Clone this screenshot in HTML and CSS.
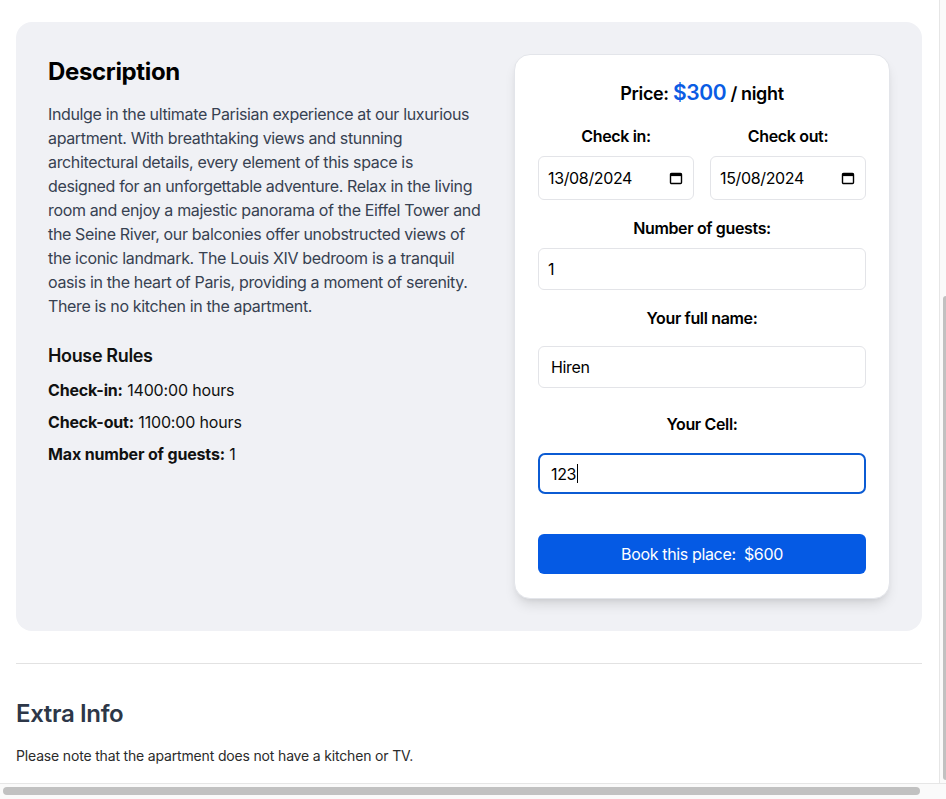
FILE: index.html
```html
<!DOCTYPE html>
<html>
<head>
<meta charset="utf-8">
<link rel="stylesheet" href="styles.css">
</head>
<body>
<div class="window">
  <div class="top-row">
    <main class="main">
      <section class="panel">
        <div class="info">
          <h2 class="title">Description</h2>
          <p class="desc">Indulge in the ultimate Parisian experience at our luxurious apartment. With breathtaking views and stunning architectural details, every element of this space is designed for an unforgettable adventure. Relax in the living room and enjoy a majestic panorama of the Eiffel Tower and the Seine River, our balconies offer unobstructed views of the iconic landmark. The Louis XIV bedroom is a tranquil oasis in the heart of Paris, providing a moment of serenity. There is no kitchen in the apartment.</p>
          <h3 class="rules-title">House Rules</h3>
          <p class="rule"><b>Check-in:</b> 1400:00 hours</p>
          <p class="rule"><b>Check-out:</b> 1100:00 hours</p>
          <p class="rule"><b>Max number of guests:</b> 1</p>
        </div>
        <div class="card">
          <div class="price">Price: <span class="amount">$300</span> / night</div>
          <div class="dates">
            <div class="date-col">
              <div class="label">Check in:</div>
              <div class="date-field"><span>13/08/2024</span>
                <svg class="cal" width="14" height="14" viewBox="0 0 14 14"><rect x="1.5" y="2.5" width="11" height="10" rx="1" fill="none" stroke="#000" stroke-width="1.4"/><rect x="1.5" y="2.5" width="11" height="2.6" fill="#000"/></svg>
              </div>
            </div>
            <div class="date-col">
              <div class="label">Check out:</div>
              <div class="date-field"><span>15/08/2024</span>
                <svg class="cal" width="14" height="14" viewBox="0 0 14 14"><rect x="1.5" y="2.5" width="11" height="10" rx="1" fill="none" stroke="#000" stroke-width="1.4"/><rect x="1.5" y="2.5" width="11" height="2.6" fill="#000"/></svg>
              </div>
            </div>
          </div>
          <div class="label label-guests">Number of guests:</div>
          <input class="field field-guests" type="text" value="1">
          <div class="label label-name">Your full name:</div>
          <input class="field field-name" type="text" value="Hiren">
          <div class="label label-cell">Your Cell:</div>
          <div class="field field-cell"><span>123</span><span class="caret"></span></div>
          <button class="book">Book this place:&nbsp; $600</button>
        </div>
      </section>
      <hr class="divider">
      <h2 class="extra-title">Extra Info</h2>
      <p class="extra-text">Please note that the apartment does not have a kitchen or TV.</p>
    </main>
    <div class="vscroll"><div class="vthumb"></div></div>
  </div>
  <div class="hscroll"><div class="hthumb"></div><div class="corner"></div></div>
</div>
</body>
</html>
```

FILE: styles.css
```css
* { box-sizing: border-box; }
html, body { margin: 0; padding: 0; background: #fff; }
body {
  font-family: Inter, "Noto Sans", "Liberation Sans", sans-serif;
  color: #111;
  overflow: hidden;
  letter-spacing: -0.022em;
}
.window {
  width: 946px;
  height: 799px;
  display: flex;
  flex-direction: column;
}
.top-row {
  display: flex;
  height: 783px;
}
.main {
  width: 939px;
  height: 783px;
  overflow: hidden;
  padding: 22px 17px 0 16px;
}
.vscroll {
  width: 7px;
  border-left: 1px solid #e6e6e6;
  background: #fafafa;
  padding-top: 296px;
  padding-left: 3px;
}
.vthumb {
  width: 4px;
  height: 484px;
  background: #c1c1c1;
  border-radius: 3px 0 0 3px;
}
.hscroll {
  height: 16px;
  border-top: 1px solid #e6e6e6;
  background: #fafafa;
  display: flex;
  padding: 3px 0 0 3px;
}
.hthumb {
  width: 917px;
  height: 8px;
  background: #c1c1c1;
  border-radius: 4px;
}
.corner { flex: 1; }

.panel {
  background: #f0f1f5;
  border-radius: 16px;
  padding: 32px;
  display: grid;
  grid-template-columns: 1fr 376px;
  gap: 32px;
  align-items: start;
}
.title {
  margin: 2px 0 0;
  font-size: 24px;
  line-height: 32px;
  font-weight: 700;
  color: #000;
}
.desc {
  margin: 14px 0 0;
  font-size: 16px;
  line-height: 24px;
  color: #374151;
}
.rules-title {
  margin: 24px 0 0;
  font-size: 18px;
  line-height: 28px;
  font-weight: 600;
  color: #111;
}
.rule {
  margin: 8px 0 0;
  font-size: 16px;
  line-height: 24px;
  color: #111;
  letter-spacing: -0.01em;
}
.rule b { font-weight: 700; }

.card {
  background: #fff;
  border: 1px solid #e3e5ea;
  border-radius: 16px;
  padding: 24px 23px 24px;
  box-shadow: 0 8px 14px -4px rgba(0,0,0,0.14), 0 3px 6px -3px rgba(0,0,0,0.08);
  display: flex;
  flex-direction: column;
}
.price {
  text-align: center;
  font-size: 18px;
  line-height: 28px;
  font-weight: 600;
  color: #000;
}
.amount {
  color: #0a5ce4;
  font-size: 21px;
}
.dates {
  display: grid;
  grid-template-columns: 1fr 1fr;
  gap: 16px;
  margin-top: 16px;
}
.date-col {
  display: flex;
  flex-direction: column;
  gap: 8px;
}
.label {
  text-align: center;
  font-size: 16px;
  line-height: 24px;
  font-weight: 600;
  color: #000;
}
.date-field {
  height: 44px;
  border: 1px solid #e3e4e8;
  border-radius: 6px;
  display: flex;
  align-items: center;
  justify-content: space-between;
  padding: 0 10px 0 9px;
  font-size: 16px;
  color: #000;
}
.cal { display: block; }
.field {
  width: 100%;
  height: 42px;
  border: 1px solid #e3e4e8;
  border-radius: 6px;
  font: inherit;
  font-size: 16px;
  letter-spacing: -0.022em;
  color: #000;
  background: #fff;
  outline: none;
  margin: 0;
}
.label-guests { margin-top: 16px; }
.field-guests { margin-top: 8px; padding: 0 9px; }
.label-name { margin-top: 16px; }
.field-name { margin-top: 16px; padding: 0 12px; }
.label-cell { margin-top: 24px; }
.field-cell {
  margin-top: 17px;
  height: 41px;
  border: 2px solid #0b5bd3;
  border-radius: 7px;
  padding: 0 11px;
  display: flex;
  align-items: center;
}
.caret {
  display: inline-block;
  width: 1px;
  height: 19px;
  background: #000;
  margin-left: 1px;
}
.book {
  margin-top: 40px;
  height: 40px;
  border: none;
  border-radius: 6px;
  background: #055ae4;
  color: #fff;
  font: inherit;
  font-size: 16px;
  letter-spacing: -0.022em;
  white-space: pre;
}

.divider {
  margin: 32px 0 0;
  border: none;
  border-top: 1px solid #e2e2e2;
  height: 0;
}
.extra-title {
  margin: 34px 0 0;
  font-size: 24px;
  line-height: 32px;
  font-weight: 600;
  color: #2d3748;
}
.extra-text {
  margin: 16px 0 0;
  font-size: 14px;
  line-height: 20px;
  color: #2b2b2b;
  letter-spacing: -0.012em;
}
```
